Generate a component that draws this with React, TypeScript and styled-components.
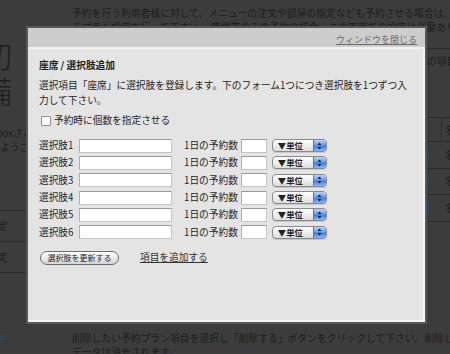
import React from "react";
import styled, { createGlobalStyle } from "styled-components";

const GlobalStyle = createGlobalStyle`
  html, body {
    margin: 0;
    padding: 0;
    background: #3c3c3c;
  }
  body {
    font-family: "Noto Sans CJK JP", "Liberation Sans", sans-serif;
    color: #1b1b1b;
  }
`;

const Page = styled.div`
  position: relative;
  width: 450px;
  height: 354px;
  overflow: hidden;
  background: #3c3c3c;
`;

/* ---- dimmed page behind the dialog ---- */

const Backdrop = styled.div`
  display: grid;
  grid-template-columns: 72px 1fr;
  height: 100%;
  color: #1c1c1c;
  font-size: 9.8px;
`;

const Sidebar = styled.div`
  overflow: hidden;
  display: flex;
  flex-direction: column;
`;

const BigGlyphs = styled.div`
  margin: 37px 0 0 -19px;
  font-size: 31px;
  line-height: 35px;
  font-weight: 300;
  color: #1e1e1e;
`;

const UserLine = styled.div<{ $shift: number }>`
  margin-left: ${(p) => p.$shift}px;
  line-height: 14px;
  white-space: nowrap;
`;

const UserBox = styled.div`
  margin-top: 19px;
`;

const NavList = styled.div`
  margin-top: 56px;
  width: 26px;
`;

const NavItem = styled.div<{ $blue?: boolean }>`
  height: 30px;
  line-height: 30px;
  border-top: 1px solid #2a2a2a;
  white-space: nowrap;
  text-indent: -12px;
  color: ${(p) => (p.$blue ? "#2b4a6a" : "#1c1c1c")};
`;

const Main = styled.div`
  display: flex;
  flex-direction: column;
  overflow: hidden;
`;

const Para = styled.p`
  margin: 0;
  line-height: 13.5px;
  white-space: nowrap;
`;

const Intro = styled(Para)`
  padding-top: 7px;
`;

const MidRow = styled.div`
  flex: 1;
  display: grid;
  grid-template-columns: 355px 1fr;
`;

const RightStrip = styled.div`
  display: flex;
  flex-direction: column;
  padding-top: 14px;
  white-space: nowrap;
`;

const Rule = styled.div`
  border-top: 1px solid #2a2a2a;
  padding-top: 6px;
  line-height: 12px;
`;

const Table = styled.div`
  margin-top: 50px;
  border-top: 1px solid #2a2a2a;
`;

const TRow = styled.div<{ $head?: boolean }>`
  display: grid;
  grid-template-columns: 15px 1fr;
  height: ${(p) => (p.$head ? 23 : 25.5)}px;
  align-items: center;
  border-bottom: 1px solid #2a2a2a;
`;

const TCell = styled.div<{ $line?: boolean }>`
  height: 100%;
  display: flex;
  align-items: center;
  padding-left: 3px;
  border-right: ${(p) => (p.$line ? "1px solid #2a2a2a" : "none")};
`;

const EdgeButton = styled.span`
  width: 3px;
  height: 12px;
  margin-left: -3px;
  border: 1px solid #24405f;
  border-left: none;
  border-radius: 0 6px 6px 0;
`;

const Outro = styled(Para)`
  margin-bottom: -5px;
`;

/* ---- dialog ---- */

const Modal = styled.div`
  position: absolute;
  left: 26px;
  top: 26px;
  width: 401px;
  height: 298px;
  box-sizing: border-box;
  border: 2px solid #585858;
  background: #e4e4e4;
  display: flex;
  flex-direction: column;
`;

const ModalHeader = styled.div`
  height: 21px;
  box-sizing: border-box;
  padding: 4px 8px 0 0;
  background: #cdcdcd;
  border-bottom: 2px solid #f3f3f3;
  display: flex;
  justify-content: flex-end;
  align-items: center;
`;

const CloseLink = styled.a`
  font-size: 9px;
  color: #6a6a6a;
  text-decoration: underline;
  cursor: pointer;
`;

const ModalBody = styled.div`
  flex: 1;
  padding: 9px 11px 0;
  border-right: 2px solid #f4f4f4;
  border-bottom: 2px solid #f4f4f4;
  font-size: 9.7px;
  line-height: 15px;
  color: #1e1e1e;
`;

const Title = styled.h2`
  margin: 0;
  font-size: 9.7px;
  line-height: 15px;
  font-weight: bold;
`;

const Desc = styled.p`
  margin: 5px 0 0;
  white-space: nowrap;
`;

const CheckRow = styled.label`
  margin-top: 5px;
  display: flex;
  align-items: center;
  gap: 3px;
  padding-left: 2px;
`;

const CheckBox = styled.span`
  width: 8px;
  height: 8px;
  background: #fff;
  border: 1px solid #8e8e8e;
  border-radius: 1px;
`;

const Rows = styled.div`
  margin-top: 10.5px;
  display: flex;
  flex-direction: column;
  gap: 3.35px;
`;

const Row = styled.div`
  display: flex;
  align-items: center;
  height: 14px;
`;

const RowLabel = styled.span`
  width: 40px;
  white-space: nowrap;
`;

const TextInput = styled.span<{ $w: number }>`
  width: ${(p) => p.$w}px;
  height: 14px;
  box-sizing: border-box;
  background: #fff;
  border: 1px solid #c4c4c4;
  border-top-color: #9a9a9a;
  border-left-color: #b0b0b0;
`;

const CountLabel = styled.span`
  margin: 0 3px 0 12px;
  white-space: nowrap;
`;

const Select = styled.span`
  margin-left: 5px;
  width: 55px;
  height: 13px;
  box-sizing: border-box;
  display: flex;
  border: 1px solid #8a8a8a;
  border-radius: 4px;
  overflow: hidden;
  background: linear-gradient(#ffffff, #ececec 60%, #dcdcdc);
  box-shadow: 0 1px 0 rgba(0, 0, 0, 0.12);
`;

const SelectText = styled.span`
  flex: 1;
  padding-left: 5px;
  font-size: 8.3px;
  line-height: 11px;
  font-weight: bold;
  color: #222;
  white-space: nowrap;
`;

const Stepper = styled.span`
  width: 12px;
  display: flex;
  align-items: center;
  justify-content: center;
  border-left: 1px solid #4e78b8;
  background: linear-gradient(#b9d3f7, #6b9eea 45%, #3f7fe0 55%, #8cb8f4);
`;

const Footer = styled.div`
  margin-top: 11px;
  display: flex;
  align-items: center;
`;

const PillButton = styled.button`
  width: 79px;
  height: 14px;
  padding: 0;
  margin-left: 1px;
  border: 1px solid #6c6c6c;
  border-radius: 8px;
  background: linear-gradient(#ffffff, #e6e6e6 60%, #d4d4d4);
  font-family: inherit;
  font-size: 8px;
  line-height: 12px;
  color: #222;
`;

const AddLink = styled.a`
  margin-left: 21px;
  font-size: 9.7px;
  color: #333;
  text-decoration: underline;
  cursor: pointer;
`;

function StepArrows() {
  return (
    <svg width="5" height="8" viewBox="0 0 5 8">
      <path d="M2.5 0.5 L4.5 3 L0.5 3 Z" fill="#14233d" />
      <path d="M2.5 7.5 L4.5 5 L0.5 5 Z" fill="#14233d" />
    </svg>
  );
}

const ROWS = [1, 2, 3, 4, 5, 6];

export default function App() {
  return (
    <Page>
      <GlobalStyle />
      <Backdrop>
        <Sidebar>
          <BigGlyphs>
            初<br />備
          </BigGlyphs>
          <UserBox>
            <UserLine $shift={-26}>Dropboxさん</UserLine>
            <UserLine $shift={0}>ようこそ</UserLine>
          </UserBox>
          <NavList>
            <NavItem>設定</NavItem>
            <NavItem>設定</NavItem>
            <NavItem />
            <NavItem $blue style={{ marginTop: 20, borderTop: "none" }}>
              設定
            </NavItem>
          </NavList>
        </Sidebar>
        <Main>
          <Intro>
            予約を行う利用者様に対して、メニューの注文や部屋の指定なども予約させる場合は、
            <br />
            るプラン設定を行って下さい。 時間帯のみの予約の場合、この画面での設定は必要ありません。
          </Intro>
          <MidRow>
            <div />
            <RightStrip>
              <Rule>の項目</Rule>
              <Table>
                <TRow $head>
                  <TCell $line />
                  <TCell>名</TCell>
                </TRow>
                {[0, 1, 2].map((i) => (
                  <TRow key={i}>
                    <TCell>
                      <EdgeButton />
                    </TCell>
                    <TCell>名</TCell>
                  </TRow>
                ))}
              </Table>
            </RightStrip>
          </MidRow>
          <Outro>
            削除したい予約プラン項目を選択し「削除する」ボタンをクリックして下さい。削除した
            <br />
            データは消去されます。
          </Outro>
        </Main>
      </Backdrop>

      <Modal>
        <ModalHeader>
          <CloseLink>ウィンドウを閉じる</CloseLink>
        </ModalHeader>
        <ModalBody>
          <Title>座席 / 選択肢追加</Title>
          <Desc>
            選択項目「座席」に選択肢を登録します。下のフォーム1つにつき選択肢を1つずつ入
            <br />
            力して下さい。
          </Desc>
          <CheckRow>
            <CheckBox />
            予約時に個数を指定させる
          </CheckRow>
          <Rows>
            {ROWS.map((n) => (
              <Row key={n}>
                <RowLabel>選択肢{n}</RowLabel>
                <TextInput $w={93} />
                <CountLabel>1日の予約数</CountLabel>
                <TextInput $w={26} />
                <Select>
                  <SelectText>▼単位</SelectText>
                  <Stepper>
                    <StepArrows />
                  </Stepper>
                </Select>
              </Row>
            ))}
          </Rows>
          <Footer>
            <PillButton>選択肢を更新する</PillButton>
            <AddLink>項目を追加する</AddLink>
          </Footer>
        </ModalBody>
      </Modal>
    </Page>
  );
}
